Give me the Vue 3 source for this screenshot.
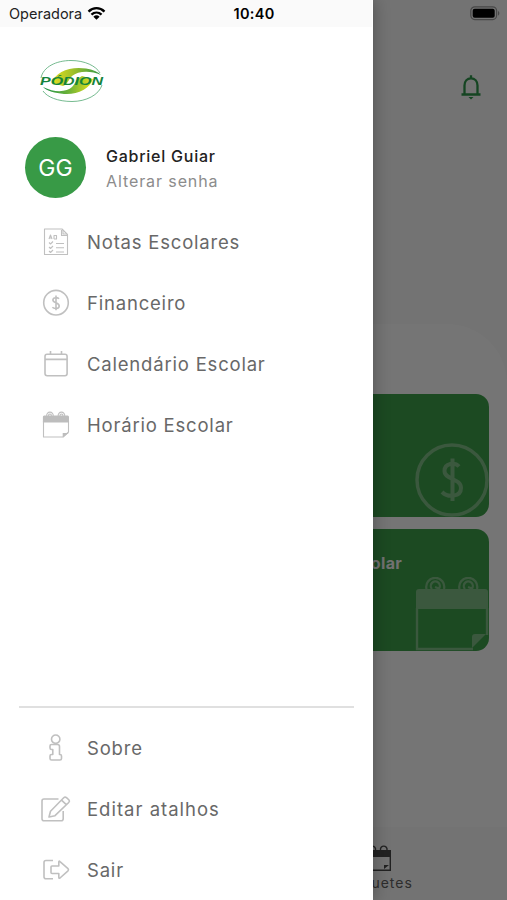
<template>
  <div class="screen">
    <div class="page">
      <header class="top">
        <svg class="bell" viewBox="0 0 24 28">
          <path d="M5.5 21V12.5C5.5 8 8.3 5.3 12 5.3S18.5 8 18.5 12.5V21" />
          <path d="M2.5 21.5H21.5M12 2.2V5" />
          <path class="clapper" d="M9.5 24H14.5L12 26.5Z" />
        </svg>
      </header>

      <main class="panel">
        <div class="card">
          <span class="card-title">Financeiro</span>
          <svg class="card-icon" viewBox="0 0 74 74">
            <circle class="ring" cx="37" cy="37" r="35" />
            <path
              class="dollar"
              d="M44 23.5C40 19 29.5 20 29.5 28C29.5 37 46 35 46 45C46 54 33 55 27 49M37.5 15.5V58"
            />
          </svg>
        </div>
        <div class="card">
          <span class="card-title">Horário Escolar</span>
          <svg class="card-icon" viewBox="0 0 74 74">
            <path class="fill" d="M4 12H70Q73 12 73 15V32H1V15Q1 12 4 12Z" />
            <path class="edge" d="M2 31V72H58M72 58V31" />
            <g class="rings">
              <path d="M11.5 12A9 9 0 1 1 29 12M17 12A4.5 4.5 0 1 1 24 11.5L20 10" />
              <path d="M44.5 12A9 9 0 1 1 62 12M50 12A4.5 4.5 0 1 1 57 11.5L53 10" />
            </g>
            <path class="fill" d="M57 71V60Q57 57 60 57H71Z" />
          </svg>
        </div>
      </main>

      <nav class="tabs">
        <div class="tab">
          <svg class="tab-icon" viewBox="0 0 28 28">
            <path d="M1.7 10V25.3H26.3V10" />
            <path class="solid" d="M1 5H27V12H1ZM20 24V20H25Z" />
            <path d="M5 5A3.3 3.3 0 1 1 11.5 5M16.5 5A3.3 3.3 0 1 1 23 5" />
          </svg>
          <span>Enquetes</span>
        </div>
      </nav>
    </div>

    <div class="scrim"></div>

    <aside class="drawer">
      <svg class="logo" viewBox="0 0 66 44">
        <defs>
          <linearGradient id="swooshTop">
            <stop offset="0" stop-color="#e5df20" />
            <stop offset="0.45" stop-color="#9dbf2b" />
            <stop offset="1" stop-color="#2f9748" />
          </linearGradient>
          <linearGradient id="swooshBottom">
            <stop offset="0" stop-color="#1b9149" />
            <stop offset="0.55" stop-color="#74b536" />
            <stop offset="1" stop-color="#e9e21c" />
          </linearGradient>
        </defs>
        <path
          class="orbit"
          d="M2 19C4 8 17 1.5 32 1.5C46 1.5 57 7 61 14M63 26C60 36 47 42.5 33 42.5C19 42.5 8 38 4 32"
        />
        <path
          fill="url(#swooshTop)"
          d="M13 24C16 13 31 7 47 9.5C54 10.5 59 13 62 16C51 11 39 12 33 17C29 21 29 25 24 27Z"
        />
        <path
          fill="url(#swooshBottom)"
          d="M4 28C16 34 28 33 33 28C37 24 37 20 43 17L54 20C51 30 38 36 25 35C16 34 8 32 4 28Z"
        />
        <text x="1" y="25.5" textLength="63" lengthAdjust="spacingAndGlyphs">PÓDION</text>
      </svg>

      <div class="profile">
        <div class="avatar">GG</div>
        <div class="who">
          <strong>Gabriel Guiar</strong>
          <span>Alterar senha</span>
        </div>
      </div>

      <ul class="menu">
        <li v-for="item in menu" :key="item.label">
          <svg class="icon" viewBox="0 0 32 32">
            <path v-for="(d, i) in item.lines" :key="i" :d="d" />
            <path v-for="(d, i) in item.thin" :key="'t' + i" class="thin" :d="d" />
            <path v-for="(d, i) in item.solid" :key="'s' + i" class="solid" :d="d" />
          </svg>
          <span :class="item.name">{{ item.label }}</span>
        </li>
      </ul>

      <ul class="menu bottom">
        <li v-for="item in options" :key="item.label">
          <svg class="icon" viewBox="0 0 32 32">
            <path v-for="(d, i) in item.lines" :key="i" :d="d" />
          </svg>
          <span :class="item.name">{{ item.label }}</span>
        </li>
      </ul>
    </aside>

    <div class="status">
      <div class="carrier">
        <span>Operadora</span>
        <svg class="wifi" viewBox="0 0 20 15">
          <path d="M1.6 5.5C6.4 0.7 13.6 0.7 18.4 5.5M4.7 8.7C7.8 5.8 12.2 5.8 15.3 8.7" />
          <path class="dot" d="M6.7 10.8Q10 8 13.3 10.8L10 14.2Z" />
        </svg>
      </div>
      <span class="clock">10:40</span>
      <svg class="battery" viewBox="0 0 31 15">
        <rect class="shell" x="0.8" y="0.8" width="25.8" height="12.8" rx="4" />
        <rect x="2.7" y="2.7" width="22" height="9" rx="2" />
        <path class="tip" d="M28 4.7Q30.8 7.2 28 9.7Z" />
      </svg>
    </div>
  </div>
</template>

<script setup>
import { ref } from "vue";

let menu = ref([
  {
    name: "notas",
    label: "Notas Escolares",
    thin: [
      "M4.5 3H22L27.5 8.5V28.5H4.5Z",
      "M21.5 4V9.5H27M23 4V8H27",
      "M9 13L10.5 9L12 13M9.5 12H11.5M14 13V9.5H16.5V13H14",
      "M9 16.5L10.5 18L13 15.5M9 21L10.5 22.5L13 20M9 25L10.5 26.5L13 24",
      "M16 17.5H24M16 21.8H24M16 26H24",
    ],
  },
  {
    name: "financeiro",
    label: "Financeiro",
    lines: [
      "M28.3 15.7A12.3 12.3 0 1 1 3.7 15.7A12.3 12.3 0 1 1 28.3 15.7Z",
      "M19 11.8C17.7 10 12.9 10.2 12.9 13C12.9 16.2 19.2 15.4 19.2 18.9C19.2 22 14.1 22 12.4 20.2M16 8.5V23.3",
    ],
  },
  {
    name: "calendario",
    label: "Calendário Escolar",
    lines: [
      "M7 6.3H25Q27.1 6.3 27.1 8.5V25.5Q27.1 27.7 25 27.7H7.2Q5 27.7 5 25.5V8.5Q5 6.3 7 6.3Z",
      "M5 11.4H27.1M10.5 3V6M21.5 3V6",
    ],
  },
  {
    name: "horario",
    label: "Horário Escolar",
    thin: [
      "M3.5 12V28H23.2L28.5 23V12",
      "M6.7 7A3.3 3.3 0 1 1 13.2 7M8.7 7A1.4 1.4 0 1 1 11.2 7M18.2 7A3.3 3.3 0 1 1 24.7 7M20.2 7A1.4 1.4 0 1 1 22.7 7",
    ],
    solid: ["M4.2 6.5H27.7Q29 6.5 29 8V13.5H2.9V8Q2.9 6.5 4.2 6.5ZM22.7 28.3V24H28.7Z"],
  },
]);

let options = ref([
  {
    name: "sobre",
    label: "Sobre",
    lines: [
      "M19.9 7.2A4.2 4.2 0 1 1 11.5 7.2A4.2 4.2 0 1 1 19.9 7.2Z",
      "M11.5 12.5H17.5Q19.5 12.5 19.5 14.5V22.5H20Q21.5 22.5 21.5 24V26.5Q21.5 28 20 28H11.5Q10 28 10 26.5V24Q10 22.5 11.5 22.5H12.8V17.5H11.5Q10 17.5 10 16V14Q10 12.5 11.5 12.5Z",
    ],
  },
  {
    name: "editar",
    label: "Editar atalhos",
    lines: [
      "M18.5 6H4Q2 6 2 8V25.7Q2 27.7 4 27.7H21.2Q23.2 27.7 23.2 25.7V18",
      "M9 24L10.5 18.2L23.7 4.8Q25 3.5 26.5 4.7L29 7Q30 8.2 28.7 9.5L15 22.7ZM21.5 7.2L26.3 11.7",
    ],
  },
  {
    name: "sair",
    label: "Sair",
    lines: [
      "M13 6.5H6Q4 6.5 4 8.5V22.8Q4 24.8 6 24.8H13",
      "M12 12H18.8V8Q18.8 6.5 20 7.6L28 14.6Q29 15.7 28 16.8L20 24Q18.8 24.8 18.8 23.3V19.5H12Q11 19.5 11 18.5V13Q11 12 12 12Z",
    ],
  },
]);
</script>

<style>
body {
  margin: 0;
}
</style>

<style scoped>
.screen {
  position: relative;
  width: 507px;
  height: 900px;
  overflow: hidden;
  font-family: Inter, "Noto Sans", sans-serif;
}

.page {
  display: flex;
  flex-direction: column;
  height: 900px;
  background: #e6e6e6;
}

.top {
  display: flex;
  justify-content: flex-end;
  box-sizing: border-box;
  height: 324px;
  padding: 73px 24px 0 0;
}

.bell {
  width: 24px;
  height: 28px;
  fill: none;
  stroke: #2b8a45;
  stroke-width: 2.3;
}

.bell .clapper {
  fill: #2b8a45;
  stroke: none;
}

.panel {
  display: grid;
  flex: 1;
  grid-template-columns: 230px;
  align-content: start;
  justify-content: end;
  gap: 12px;
  padding: 70px 18px 0;
  background: #ebebeb;
  border-radius: 0 60px 0 0;
}

.card {
  display: flex;
  flex-direction: column;
  justify-content: space-between;
  box-sizing: border-box;
  height: 122.5px;
  background: #389444;
  border-radius: 13px;
  overflow: hidden;
}

.card-title {
  padding: 23px 0 0 18px;
  color: #e2e2e2;
  font-size: 16px;
  font-weight: 700;
  letter-spacing: 0.35px;
  line-height: 22px;
}

.card-icon {
  align-self: flex-end;
  width: 74px;
  height: 74px;
  fill: none;
  stroke: #76b07c;
  stroke-width: 3.5;
}

.card-icon .dollar {
  stroke-width: 4;
}

.card-icon .fill {
  fill: #76b07c;
  stroke: none;
}

.card-icon .edge {
  stroke-width: 2.4;
}

.card-icon .rings {
  stroke-width: 2.3;
}

.tabs {
  display: flex;
  box-sizing: border-box;
  height: 73px;
  padding: 18px 0 0 336px;
  background: #e7e7e7;
}

.tab {
  display: flex;
  flex-direction: column;
  align-items: center;
  width: 84px;
  color: #5a5a5a;
  font-size: 14px;
  letter-spacing: 1px;
  line-height: 20px;
}

.tab-icon {
  width: 28px;
  height: 28px;
  fill: none;
  stroke: #444;
  stroke-width: 1.4;
}

.tab-icon .solid {
  fill: #444;
  stroke: none;
}

.scrim {
  position: absolute;
  inset: 0;
  background: rgba(0, 0, 0, 0.5);
}

.drawer {
  position: absolute;
  top: 0;
  left: 0;
  display: flex;
  flex-direction: column;
  box-sizing: border-box;
  width: 372.5px;
  height: 900px;
  padding-top: 59px;
  background: #fff;
  box-shadow: 0 0 16px rgba(0, 0, 0, 0.32);
}

.logo {
  width: 66px;
  height: 44px;
  margin-left: 39px;
}

.logo .orbit {
  fill: none;
  stroke: #65b282;
  stroke-width: 0.9;
}

.logo text {
  fill: #15843c;
  font-family: "Liberation Sans", sans-serif;
  font-size: 11.5px;
  font-style: italic;
  font-weight: 700;
}

.profile {
  display: flex;
  align-items: center;
  gap: 20px;
  height: 61px;
  margin: 33.5px 0 0 25px;
}

.avatar {
  width: 61px;
  height: 61px;
  border-radius: 50%;
  background: #389a46;
  color: #fff;
  font-size: 23px;
  line-height: 63px;
  text-align: center;
}

.who {
  display: flex;
  flex-direction: column;
  margin-top: 3px;
  font-size: 16px;
  line-height: 24.5px;
}

.who strong {
  color: #222;
  font-weight: 500;
  letter-spacing: 0.75px;
}

.who span {
  color: #8c8c8c;
  letter-spacing: 0.9px;
}

.menu {
  margin: 13.5px 0 0;
  padding: 0 0 0 40px;
  list-style: none;
}

.menu li {
  display: flex;
  align-items: center;
  gap: 15px;
  height: 61px;
  color: #686868;
  font-size: 18.5px;
  letter-spacing: 0.8px;
}

.menu li .editar {
  letter-spacing: 1px;
}

.menu.bottom {
  margin: auto 19px 0;
  padding: 9px 0 0 21px;
  border-top: 2.5px solid #e0e0e0;
}

.icon {
  width: 32px;
  height: 32px;
  fill: none;
  stroke: #c0c0c0;
  stroke-width: 1.6;
  stroke-linejoin: round;
}

.icon .thin {
  stroke-width: 1.1;
}

.icon .solid {
  fill: #bdbdbd;
  stroke: none;
}

.status {
  position: absolute;
  top: 0;
  left: 0;
  display: grid;
  grid-template-columns: 1fr auto 1fr;
  align-items: center;
  box-sizing: border-box;
  width: 507px;
  height: 27px;
  padding: 0 8px 0 9px;
  background: linear-gradient(to right, #fafafa 372px, transparent 372px);
}

.carrier {
  display: flex;
  align-items: center;
  gap: 5px;
  color: #222;
  font-size: 14.5px;
}

.wifi {
  width: 19px;
  height: 15px;
  fill: none;
  stroke: #000;
  stroke-width: 2.5;
}

.wifi .dot {
  fill: #000;
  stroke: none;
}

.clock {
  color: #000;
  font-size: 14.5px;
  font-weight: 600;
  letter-spacing: 0.3px;
}

.battery {
  justify-self: end;
  width: 31px;
  height: 15px;
  margin-right: -2px;
}

.battery .shell {
  fill: none;
  stroke: #484848;
  stroke-width: 1.2;
}

.battery .tip {
  fill: #484848;
}
</style>
